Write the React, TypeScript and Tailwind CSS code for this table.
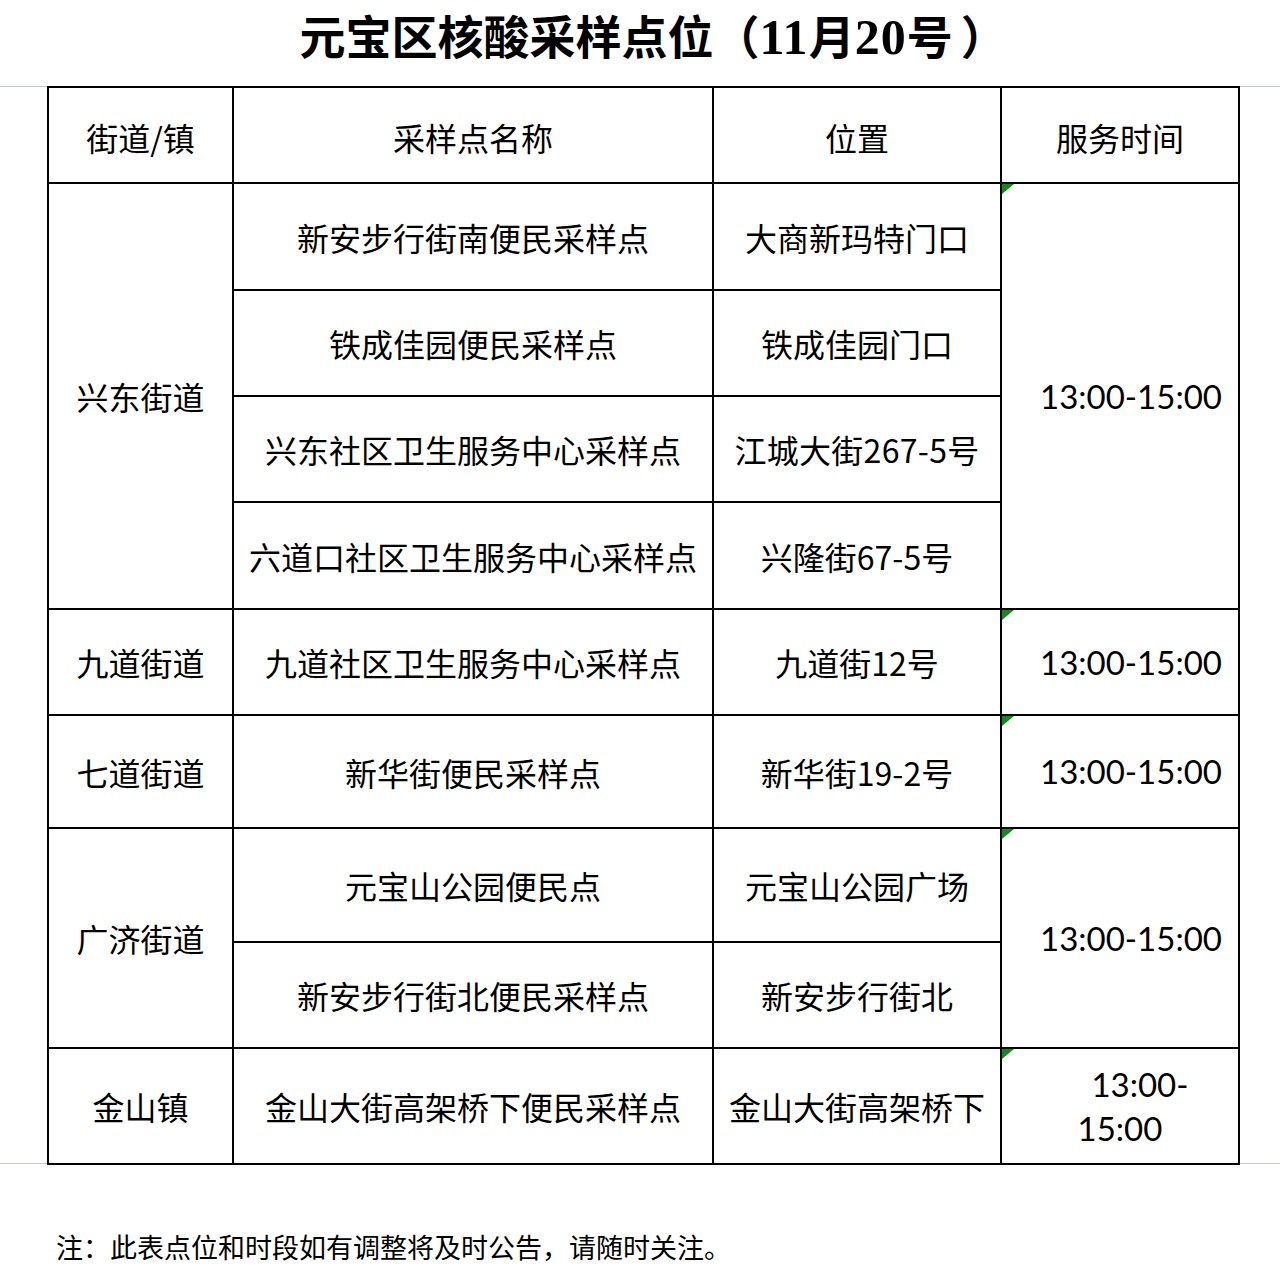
import React from "react"

const cjk = "font-['Noto_Sans_CJK_SC',sans-serif]"
const num = "font-['Lato','Noto_Sans_CJK_SC',sans-serif]"

function Corner() {
  return (
    <svg className="absolute left-0 top-0" width="12" height="10" viewBox="0 0 12 10">
      <polygon points="0,0 12,0 0,10" fill="#138a1b" />
    </svg>
  )
}

function Cell({ children, className = "" }: { children?: React.ReactNode; className?: string }) {
  return (
    <div className={`relative bg-white flex items-center justify-center text-center text-[32px] leading-none text-black ${cjk} ${className}`}>
      {children}
    </div>
  )
}

function TimeCell({ className = "" }: { className?: string }) {
  return (
    <Cell className={className}>
      <Corner />
      <span className={`${num} text-[33px] pl-[22px]`}>13:00-15:00</span>
    </Cell>
  )
}

export default function App() {
  return (
    <div className="w-[1280px] h-[1280px] bg-white [text-spacing-trim:space-all]">
      {/* title */}
      <div className="h-[86px] text-center">
        <h1 className="leading-[74px] text-[46px] font-bold text-black font-['Liberation_Serif','Noto_Sans_CJK_SC',serif] pl-[26px]">
          元宝区核酸采样点位（<span className="text-[50px] tracking-[1px]">11</span>月<span className="text-[50px] tracking-[1px]">20</span>号<span className="pl-[8px]">）</span>
        </h1>
      </div>

      {/* sheet gridlines around the table */}
      <div className="w-full border-y border-[#c3c9d6]">
        <div className="ml-[47px] -mt-px -mb-[2px] w-[1193px] bg-black p-[2px]">
          <div className="grid gap-[2px] grid-cols-[183px_478px_286px_236px] grid-rows-[94px_105px_104px_104px_105px_104px_111px_112px_104px_114px]">
            <Cell className="pt-[4px]">街道/镇</Cell>
            <Cell className="pt-[4px]">采样点名称</Cell>
            <Cell className="pt-[4px]">位置</Cell>
            <Cell className="pt-[4px]">服务时间</Cell>

            <Cell className="row-span-4">兴东街道</Cell>
            <Cell>新安步行街南便民采样点</Cell>
            <Cell>大商新玛特门口</Cell>
            <TimeCell className="row-span-4" />
            <Cell>铁成佳园便民采样点</Cell>
            <Cell>铁成佳园门口</Cell>
            <Cell>兴东社区卫生服务中心采样点</Cell>
            <Cell className="tracking-[0.3px]">江城大街267-5号</Cell>
            <Cell>六道口社区卫生服务中心采样点</Cell>
            <Cell>兴隆街67-5号</Cell>

            <Cell>九道街道</Cell>
            <Cell>九道社区卫生服务中心采样点</Cell>
            <Cell>九道街12号</Cell>
            <TimeCell />

            <Cell>七道街道</Cell>
            <Cell>新华街便民采样点</Cell>
            <Cell>新华街19-2号</Cell>
            <TimeCell />

            <Cell className="row-span-2">广济街道</Cell>
            <Cell>元宝山公园便民点</Cell>
            <Cell>元宝山公园广场</Cell>
            <TimeCell className="row-span-2" />
            <Cell>新安步行街北便民采样点</Cell>
            <Cell>新安步行街北</Cell>

            <Cell>金山镇</Cell>
            <Cell>金山大街高架桥下便民采样点</Cell>
            <Cell>金山大街高架桥下</Cell>
            <Cell>
              <Corner />
              <div className={`${num} text-[33px] leading-[44px] flex flex-col items-center`}>
                <span className="pl-[40px]">13:00-</span>
                <span>15:00</span>
              </div>
            </Cell>
          </div>
        </div>
      </div>

      {/* note */}
      <p className={`mt-[65px] pl-[56px] text-[27px] leading-[36px] text-black ${cjk}`}>
        注：此表点位和时段如有调整将及时公告，请随时关注。
      </p>
    </div>
  )
}
